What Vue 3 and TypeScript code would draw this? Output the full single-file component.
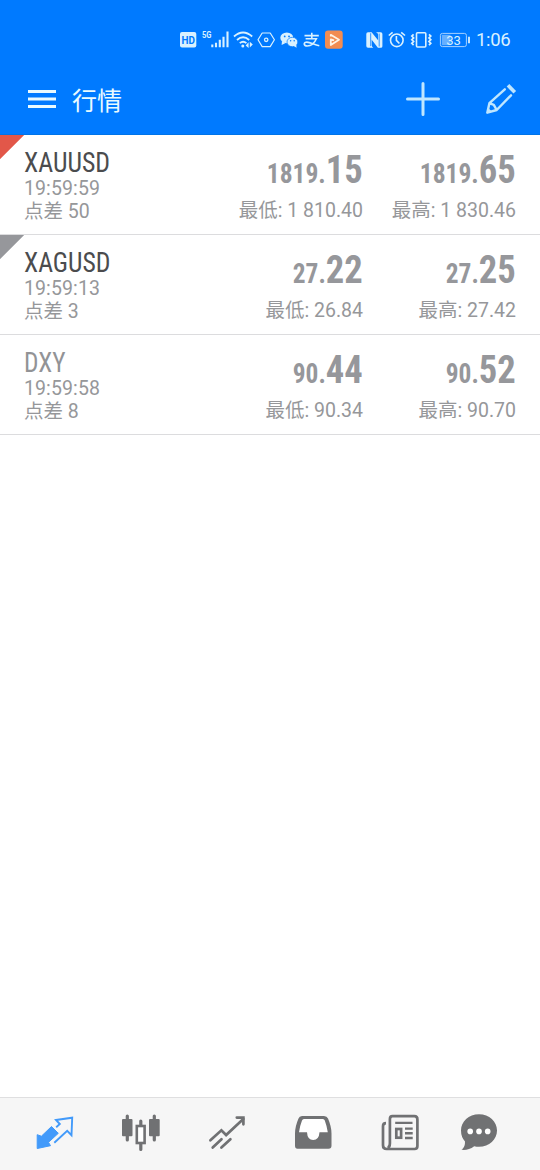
<script setup lang="ts">
interface Price {
  whole: string
  wholeWidth: number
  cents: string
}
interface Quote {
  symbol: string
  symbolWidth: number
  time: string
  spread: number
  bid: Price
  ask: Price
  low: string
  high: string
  tone: string
  flag?: string
}

const quotes: Quote[] = [
  {
    symbol: 'XAUUSD', symbolWidth: 86, time: '19:59:59', spread: 50,
    bid: { whole: '1819.', wholeWidth: 59, cents: '15' },
    ask: { whole: '1819.', wholeWidth: 59, cents: '65' },
    low: '1 810.40', high: '1 830.46', tone: 'dark', flag: 'red',
  },
  {
    symbol: 'XAGUSD', symbolWidth: 86.5, time: '19:59:13', spread: 3,
    bid: { whole: '27.', wholeWidth: 33, cents: '22' },
    ask: { whole: '27.', wholeWidth: 33, cents: '25' },
    low: '26.84', high: '27.42', tone: 'dark', flag: 'gray',
  },
  {
    symbol: 'DXY', symbolWidth: 41.5, time: '19:59:58', spread: 8,
    bid: { whole: '90.', wholeWidth: 33, cents: '44' },
    ask: { whole: '90.', wholeWidth: 33, cents: '52' },
    low: '90.34', high: '90.70', tone: 'light',
  },
]

const centsWidth = 37
const priceEnd = 109.8
</script>

<template>
  <div class="screen">
    <header class="top">
      <div class="status">
        <svg width="20" height="24" viewBox="180 28 20 24">
          <rect x="180" y="32" width="16.3" height="15.5" rx="2" fill="#d9f1ff" />
          <text x="188.2" y="43.8" class="hd" text-anchor="middle" textLength="13.4" lengthAdjust="spacingAndGlyphs">HD</text>
        </svg>
        <svg width="32" height="24" viewBox="200 28 32 24">
          <text x="202" y="38.2" class="g5" textLength="9.5" lengthAdjust="spacingAndGlyphs">5G</text>
          <path d="M212.3 47.3v-2.8M216 47.3v-4.6M219.8 47.3v-7.5M223.5 47.3v-10.5M227.5 47.3v-15.8" class="ln" stroke-width="2.1" />
        </svg>
        <svg width="24" height="24" viewBox="232 28 24 24">
          <path d="M234 36.5q9-8 18.2 0M237 40q6-5.4 12.2 0M239.8 43.2q3.300-3 6.600 0" class="ln" stroke-width="1.8" />
          <circle cx="242.8" cy="46" r="1.5" fill="#d9f1ff" />
          <path d="M248.600 42.200v5.800l-3-2.600zM249.800 47.600v-5.800l3 2.600z" fill="#d9f1ff" />
        </svg>
        <svg width="22" height="24" viewBox="256 28 22 24">
          <path d="M262.2 33h8l4.200 6.800-4.200 6.800h-8l-4.200-6.800z" class="ln" stroke-width="1.2" stroke-linejoin="round" />
          <circle cx="266.2" cy="39.8" r="1.7" class="ln" stroke-width="1.3" />
        </svg>
        <svg width="23" height="24" viewBox="278 28 23 24">
          <g fill="#d9f1ff">
            <ellipse cx="286.8" cy="37.8" rx="6.5" ry="5.4" />
            <path d="M282 41l-.4 4 4-2z" />
            <ellipse cx="292.4" cy="42" rx="5.4" ry="4.7" stroke="#007aff" stroke-width=".7" />
            <path d="M293 45.500l3.600 2.300-.4-3.600z" />
          </g>
          <g fill="#007aff">
            <circle cx="284.7" cy="36.4" r=".9" /><circle cx="289" cy="36.4" r=".9" />
            <circle cx="290.6" cy="40.8" r=".75" /><circle cx="294.2" cy="40.8" r=".75" />
          </g>
        </svg>
        <svg width="22" height="24" viewBox="301 28 22 24">
          <path d="M304.500 35.600h14.300M311.800 32.800v6M305.600 38.800h10.800c-1.500 3.400-5 7.200-9.300 7.200-3.300 0-3.900-3.400-1-3.800 3.800-.5 7.500 2.500 13.200 3.600" class="ln" stroke-width="1.6" />
        </svg>
        <svg width="42" height="24" viewBox="323 28 42 24">
          <rect x="325" y="30.6" width="17.7" height="18.2" rx="3" fill="#f28c52" />
          <path d="M330.800 36.600v-1.800l8.200 5-8.200 5.200v-5.600l3.300 1" fill="none" stroke="#fff3e5" stroke-width="1.8" stroke-linejoin="round" />
        </svg>
        <svg width="21" height="24" viewBox="365 28 21 24">
          <path d="M369 32.200h2.600l6.500 8v-5.600q-.2-2-2.300-2.400h5q1.600 0 1.600 1.800v12.200q0 1.500-1.600 1.500h-2.900l-6.200-8v5.600q.2 2 1.600 2.400H368q-1.700 0-1.700-1.700V34q0-1.800 1.700-1.800z" fill="#d9f1ff" />
          <path d="M370.700 33.200v13M379.200 33.500v13" stroke="#007aff" stroke-width=".8" />
        </svg>
        <svg width="22" height="24" viewBox="386 28 22 24">
          <circle cx="396.8" cy="40.3" r="6.3" class="ln" stroke-width="1.6" />
          <path d="M396.400 36v4.400l3 3.100M388.800 35.500l3.800-3.200M401.200 32.300l3.800 3.200" class="ln" stroke-width="1.6" />
        </svg>
        <svg width="28" height="24" viewBox="408 28 28 24">
          <rect x="416.5" y="32.7" width="9.3" height="14.3" rx="1" class="ln" stroke-width="1.6" />
          <path d="M413.600 34.300l-1.800 1.800 1.800 1.800-1.800 1.800 1.800 1.800-1.800 1.800 1.800 1.800M429 34.300l1.800 1.800-1.800 1.800 1.800 1.800-1.800 1.800 1.800 1.800-1.800 1.800" class="ln" stroke-width="1.7" />
        </svg>
        <svg width="40" height="24" viewBox="436 28 40 24">
          <rect x="440.4" y="33.4" width="26" height="13.2" rx="2" fill="none" stroke="#a6d1ff" stroke-width="1" />
          <rect x="441.8" y="34.8" width="8.7" height="10.4" fill="#66afff" />
          <path d="M469 36.800v6.400" class="ln" stroke-width="1.8" />
          <text x="453.6" y="44.6" class="battery" text-anchor="middle">33</text>
        </svg>
        <span class="clock">1:06</span>
      </div>
      <div class="bar">
        <svg width="28" height="20" viewBox="28 89 28 20"><path d="M28 91.500h28M28 99h28M28 106.500h28" stroke="#e9faff" stroke-width="3" /></svg>
        <h1>行情</h1>
        <svg class="plus" width="34" height="34" viewBox="406 82 34 34"><path d="M407.500 99h31M423 83.500v31" stroke="#bfe6ff" stroke-width="3" stroke-linecap="round" /></svg>
        <svg width="32" height="34" viewBox="485 82 32 34">
          <g fill="none" stroke="#bfe6ff" stroke-width="2.4" stroke-linejoin="round" stroke-linecap="round">
            <path d="M504.800 89.300L489.400 103.200 487.300 112.700 496.700 110 511 95.300M489.400 103.200l4.400 1.600 2.900 5.200" />
            <path d="M508 85.300l6.800 7" stroke-width="3.6" stroke-linecap="butt" />
          </g>
          <path d="M487 113l1.200-5 4 3.700z" fill="#bfe6ff" />
        </svg>
      </div>
    </header>

    <main>
      <section v-for="q in quotes" :key="q.symbol" class="row" :class="[q.tone, q.flag]">
        <div class="info">
          <svg class="symbol" width="110" height="46" viewBox="0 0 110 46">
            <text x="0" y="37" :textLength="q.symbolWidth" lengthAdjust="spacingAndGlyphs">{{ q.symbol }}</text>
          </svg>
          <div class="small time">{{ q.time }}</div>
          <div class="small">点差 {{ q.spread }}</div>
        </div>
        <div v-for="side in [{ p: q.bid, l: '最低', v: q.low }, { p: q.ask, l: '最高', v: q.high }]" :key="side.l" class="side">
          <svg class="price" width="110" height="64" viewBox="0 0 110 64">
            <text class="whole" :x="priceEnd - centsWidth - side.p.wholeWidth" y="48" :textLength="side.p.wholeWidth" lengthAdjust="spacingAndGlyphs">{{ side.p.whole }}</text>
            <text class="cents" :x="priceEnd - centsWidth" y="48" :textLength="centsWidth" lengthAdjust="spacingAndGlyphs">{{ side.p.cents }}</text>
          </svg>
          <div class="small">{{ side.l }}: {{ side.v }}</div>
        </div>
      </section>
    </main>

    <nav>
      <svg width="40" height="40" viewBox="35 1112 40 40">
        <path d="M51.500 1126.500l6.800 6.800-9.800 9 2 3.400-13.300 2.800v-13.800l4.200 1.500z" fill="#429afa" stroke="#429afa" stroke-linejoin="round" />
        <path d="M56.200 1127.200l3.600-3.200-3.800-4 16.200-2.300-.7 17.500-4.300-4.400-12.900 12" fill="none" stroke="#429afa" stroke-width="1.9" />
      </svg>
      <svg width="40" height="40" viewBox="121 1112 40 40">
        <path d="M127.300 1116v24M154.300 1116v24M140.800 1121v4M140.800 1144v5.500" stroke="#707173" stroke-width="3.2" stroke-linecap="round" />
        <rect x="122" y="1119" width="10.5" height="17.3" rx="1" fill="#707173" />
        <rect x="149" y="1119" width="10.7" height="17.3" rx="1" fill="#707173" />
        <rect x="136.8" y="1126" width="7.8" height="17" fill="#fff" stroke="#707173" stroke-width="2.6" />
      </svg>
      <svg width="40" height="40" viewBox="207 1112 40 40">
        <g fill="none" stroke="#707173" stroke-width="2.7" stroke-linecap="round">
          <path d="M210.400 1140.300l11-10 4.700 4.700 17.200-16M212.700 1147.500l8.800-8.300M221.400 1147.500l9-8.300" />
          <path d="M236.800 1117.600h6.600v6.700" />
        </g>
      </svg>
      <svg width="40" height="40" viewBox="293 1112 40 40">
        <path d="M302 1116h22q3 0 4 2.500 3.500 8 3.500 15v12q0 3.300-3 3.300h-31q-2.500 0-2.500-3.300v-12q0-7 3.500-15 .8-2.500 3.500-2.500z" fill="#707173" />
        <path d="M304 1119h18.800q1.500 0 2 1.500 2.200 6 3 11.800h-8.300q-.5 7.700-6.300 7.700t-6.200-7.700H299q.7-6 3-11.800.5-1.500 2-1.500z" fill="#fff" />
      </svg>
      <svg width="40" height="40" viewBox="380 1112 40 40">
        <g fill="none" stroke="#707173" stroke-width="2.7">
          <path d="M386 1123.200q-3 0-3 3v19q0 3.800 3.600 3.800h28q2.800 0 2.800-3v-26.500q0-3.300-3-3.300h-22q-2.500 0-2.500 3v24q0 4.300-2.500 4.300" />
          <path d="M395.200 1122.900h17.300M405 1128.600h7.700M405 1133.300h7.700M405 1138h7.700" stroke-width="2.4" />
          <rect x="396.3" y="1129" width="4.8" height="8.7" />
        </g>
      </svg>
      <svg width="40" height="40" viewBox="459 1112 40 40">
        <path d="M479 1114.200c10.300 0 18 7.300 18 16.300s-7.700 16.300-18 16.300q-2.500 0-4.800-.6c-4 3-8.500 4.200-12.700 3.600q3.800-2.500 3.500-8.300-4-4.500-4-11c0-9 7.700-16.300 18-16.300z" fill="#707173" />
        <g fill="#fff"><circle cx="470.2" cy="1131.4" r="2.8" /><circle cx="479" cy="1131.4" r="2.8" /><circle cx="487.7" cy="1131.4" r="2.8" /></g>
      </svg>
    </nav>
  </div>
</template>

<style>
body { margin: 0; background: #fff; }
</style>

<style scoped>
.screen {
  width: 540px;
  height: 1170px;
  display: flex;
  flex-direction: column;
  background: #fff;
  font-family: Roboto, "Noto Sans CJK SC", sans-serif;
  overflow: hidden;
}
svg { display: block; flex: none; overflow: visible; }
.top { height: 135px; background: #007aff; box-sizing: border-box; border-bottom: 1px solid #0074e8; flex: none; }
.status { display: flex; height: 24px; padding: 28px 0 0 180px; }
.ln { fill: none; stroke: #d9f1ff; }
.hd { font: 700 11px Roboto, sans-serif; fill: #007aff; }
.g5 { font: 700 9px Roboto, sans-serif; fill: #d9f1ff; }
.battery { font: 400 13px Roboto, sans-serif; fill: #d9f1ff; }
.clock { font-size: 18.5px; letter-spacing: -0.3px; line-height: 25px; color: #d9f1ff; white-space: nowrap; }
.bar { display: flex; align-items: center; height: 34px; padding: 30px 23px 0 28px; }
h1 { margin: 6px 0 0 16px; font-size: 25px; line-height: 34px; font-weight: 400; color: #e9faff; }
.plus { margin-left: auto; margin-right: 45px; }
main { flex: 1; }
.row {
  display: flex;
  box-sizing: border-box;
  height: 100px;
  padding-right: 24px;
  border-bottom: 1px solid #dcdcde;
  color: #96979a;
}
.red { background: linear-gradient(135deg, #e25749 16.7px, transparent 17.5px); }
.gray { background: linear-gradient(135deg, #96979b 16.7px, transparent 17.5px); }
.info { width: 186px; padding-left: 24px; }
.symbol { margin-bottom: -4px; font: 400 27px "Roboto Condensed", Roboto, sans-serif; font-stretch: 75%; }
.dark .symbol { fill: #4b4c4e; }
.light .symbol { fill: #929396; }
.small { font-size: 19.5px; line-height: 23px; white-space: nowrap; }
.time { letter-spacing: 0.1px; }
.side { width: 153px; display: flex; flex-direction: column; align-items: flex-end; }
.price { fill: #96979b; }
.whole { font: 700 27px "Roboto Condensed", Roboto, sans-serif; font-stretch: 75%; }
.cents { font: 700 39.5px "Roboto Condensed", Roboto, sans-serif; font-stretch: 75%; }
nav {
  display: grid;
  grid-template-columns: 86px 86px 86px 87px 79px 40px;
  align-items: start;
  height: 73px;
  box-sizing: border-box;
  flex: none;
  padding: 14px 0 0 35px;
  background: #f6f6f6;
  border-top: 1px solid #dfdfe0;
}
</style>
